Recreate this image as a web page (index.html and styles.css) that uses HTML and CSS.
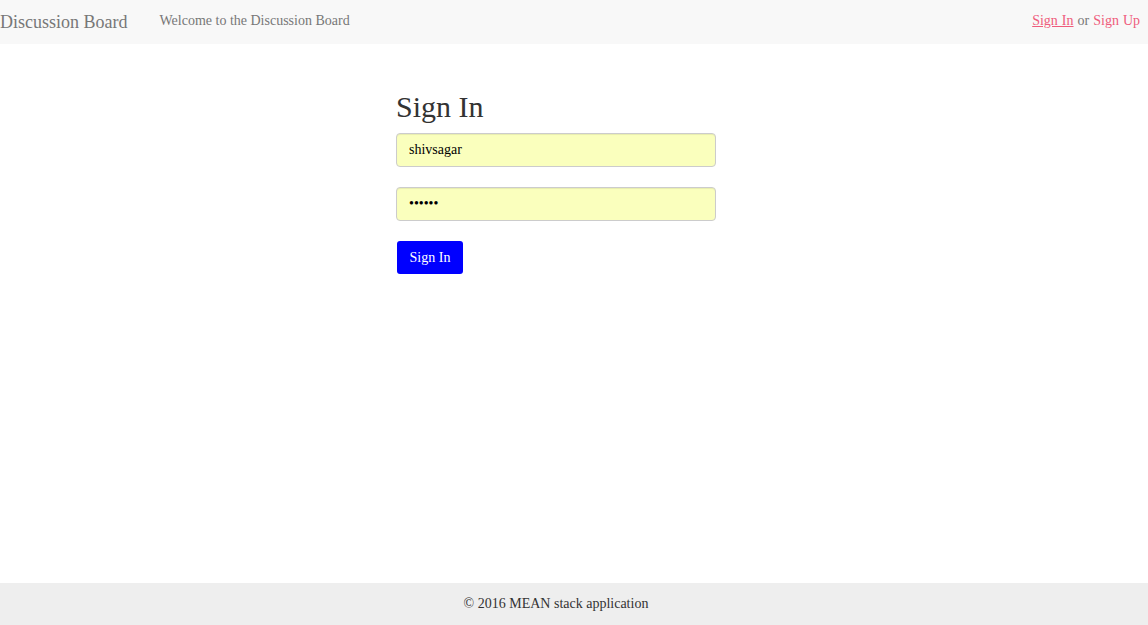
FILE: index.html
```html
<!DOCTYPE html>
<html>
<head>
<meta charset="utf-8">
<link rel="stylesheet" href="styles.css">
</head>
<body>
<div class="page">
  <nav class="navbar">
    <div class="nav-left">
      <a class="brand" href="#">Discussion Board</a>
      <span class="welcome">Welcome to the Discussion Board</span>
    </div>
    <div class="nav-right">
      <a class="link underline" href="#">Sign In</a> or <a class="link" href="#">Sign Up</a>
    </div>
  </nav>
  <main class="main">
    <form class="signin">
      <h1 class="title">Sign In</h1>
      <input class="field" type="text" value="shivsagar">
      <input class="field" type="password" value="secret">
      <button class="btn" type="button">Sign In</button>
    </form>
  </main>
  <footer class="footer">
    <span>© 2016 MEAN stack application</span>
  </footer>
</div>
</body>
</html>
```
FILE: styles.css
```css
html, body {
  margin: 0;
  padding: 0;
  height: 100%;
}
body {
  font-family: "Liberation Serif", "Times New Roman", serif;
  font-size: 14px;
  color: #333;
  background: #fff;
}
.page {
  display: flex;
  flex-direction: column;
  height: 625px;
}
.navbar {
  height: 44px;
  background: #f8f8f8;
  display: flex;
  justify-content: space-between;
  align-items: center;
  padding: 0 8px 0 0;
  flex: none;
}
.nav-left {
  display: flex;
  align-items: center;
}
.brand {
  font-size: 18px;
  color: #777;
  text-decoration: none;
  margin-right: 32px;
  line-height: 20px;
}
.welcome {
  color: #777;
  font-size: 14px;
  position: relative;
  top: -1px;
}
.nav-right {
  font-size: 14px;
  color: #777;
  position: relative;
  top: -1px;
  word-spacing: 0.5px;
}
.link {
  color: #ef5c7c;
  text-decoration: none;
}
.link.underline {
  text-decoration: underline;
}
.main {
  flex: 1;
  padding-left: 396px;
}
.signin {
  display: flex;
  flex-direction: column;
  align-items: flex-start;
  width: 320px;
}
.title {
  font-size: 30px;
  font-weight: normal;
  color: #333;
  margin: 46px 0 9px 0;
  line-height: 34px;
}
.field {
  box-sizing: border-box;
  width: 320px;
  height: 34px;
  padding: 6px 12px;
  border: 1px solid #ccc;
  border-radius: 4px;
  background: #faffbd;
  font-family: "Liberation Serif", "Times New Roman", serif;
  font-size: 14px;
  color: #000;
  margin-bottom: 20px;
  box-shadow: inset 0 1px 1px rgba(0,0,0,.075);
}
.btn {
  margin-left: 1px;
  height: 33px;
  width: 66px;
  padding: 0;
  background: #0000ff;
  color: #fff;
  border: none;
  border-radius: 3px;
  font-family: "Liberation Serif", "Times New Roman", serif;
  font-size: 14px;
}
.footer {
  flex: none;
  height: 42px;
  background: #eee;
  display: flex;
  align-items: center;
  justify-content: center;
  padding-right: 36px;
  font-size: 14px;
  color: #333;
}
```
